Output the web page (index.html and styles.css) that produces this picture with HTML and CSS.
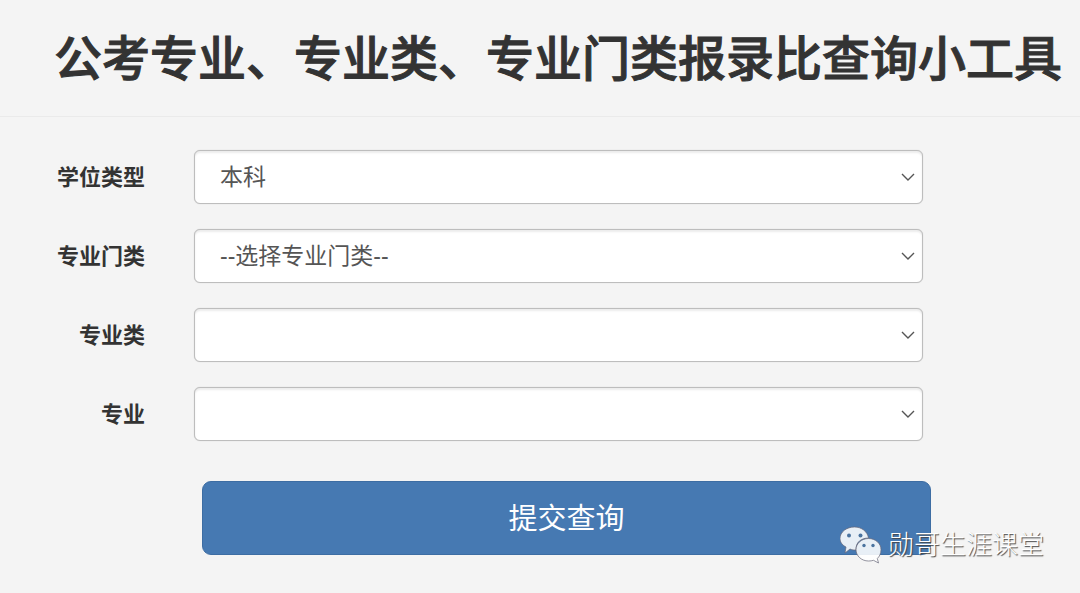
FILE: index.html
```html
<!DOCTYPE html>
<html lang="zh-CN">
<head>
<meta charset="utf-8">
<meta name="viewport" content="width=device-width, initial-scale=1">
<title>公考专业、专业类、专业门类报录比查询小工具</title>
<link rel="stylesheet" href="styles.css">
</head>
<body>
<header class="page-header"><h1 class="title">公考专业、专业类、专业门类报录比查询小工具</h1></header>
<form class="query-form">
  <div class="row">
    <label class="label" for="degree">学位类型</label>
    <div class="field"><select class="select" id="degree"><option>本科</option></select><svg class="chevron" viewBox="0 0 14 8" aria-hidden="true"><path d="M1 1l6 6 6-6"/></svg></div>
  </div>
  <div class="row">
    <label class="label" for="category">专业门类</label>
    <div class="field"><select class="select" id="category"><option>--选择专业门类--</option></select><svg class="chevron" viewBox="0 0 14 8" aria-hidden="true"><path d="M1 1l6 6 6-6"/></svg></div>
  </div>
  <div class="row">
    <label class="label" for="group">专业类</label>
    <div class="field"><select class="select" id="group"></select><svg class="chevron" viewBox="0 0 14 8" aria-hidden="true"><path d="M1 1l6 6 6-6"/></svg></div>
  </div>
  <div class="row">
    <label class="label" for="major">专业</label>
    <div class="field"><select class="select" id="major"></select><svg class="chevron" viewBox="0 0 14 8" aria-hidden="true"><path d="M1 1l6 6 6-6"/></svg></div>
  </div>
  <button class="submit" type="submit">提交查询</button>
</form>
<div class="watermark">
  <svg class="wechat" viewBox="0 0 42 38" aria-hidden="true">
    <path class="bubble" d="M16 24c-2 0-4 0-6-1l-5 4 1-6C2 19 0 16 0 12.500C0 6 6.500 1 14.500 1c7 0 13 4.500 14 11-7 0-13 4-12.500 12z"/>
    <path class="bubble" d="M28.500 12.500c-7 0-12.500 5-12.500 11.200S21.500 35 28.500 35c2 0 3.500-.2 5-.7l5 2.700-1.200-4.500c2.200-2 3.700-5 3.700-8.800 0-6.200-5.500-11.200-12.500-11.200z"/>
    <circle class="eye" cx="9" cy="9.500" r="2"/><circle class="eye" cx="20.500" cy="9.500" r="2"/>
    <circle class="eye" cx="24" cy="19.500" r="1.700"/><circle class="eye" cx="33" cy="19.500" r="1.700"/>
  </svg>
  <span>勋哥生涯课堂</span>
</div>
</body>
</html>
```
FILE: styles.css
```css
* { box-sizing: border-box; }
body { margin: 0; background: #f4f4f4; color: #333; font-family: "Liberation Sans", "Noto Sans CJK SC", sans-serif; }
.page-header { padding: 24px 0 20px 54px; border-bottom: 1px solid #eaeaea; }
.title { margin: 0; font-size: 48px; line-height: 72px; font-weight: 500; -webkit-text-stroke: 1px #333; white-space: nowrap; }
.query-form { padding: 33px 149px 39px 0; }
.row { display: grid; grid-template-columns: 145px 1fr; column-gap: 49px; align-items: center; margin: 0 8px 25px 0; }
.label { padding-top: 2px; text-align: right; font-size: 22px; line-height: 32px; font-weight: 700; }
.field { display: grid; align-items: center; }
.select { grid-area: 1 / 1; width: 100%; height: 54px; padding: 0 48px 0 25px; appearance: none; border: 1px solid #bdbdbd; border-radius: 6px; background: #fff; box-shadow: inset 0 2px 2px rgba(0,0,0,.08), 0 0 1px rgba(0,0,0,.2); color: #555; font: inherit; font-size: 23px; }
.chevron { grid-area: 1 / 1; justify-self: end; width: 14px; height: 8px; margin-right: 8px; fill: none; stroke: #555; stroke-width: 1.4; pointer-events: none; }
.submit { display: block; width: calc(100% - 202px); height: 74px; margin: 40px 0 0 202px; padding: 0 0 4px; border: 1px solid #3d6da3; border-radius: 9px; background: #4679b2; color: #fff; font: inherit; font-size: 29px; }
.watermark { position: absolute; right: 36px; bottom: 28px; display: flex; align-items: center; gap: 6px; color: #fff; font-size: 26px; line-height: 40px; font-weight: 300; text-shadow: 1px 1px 1px #444; }
.wechat { width: 42px; height: 38px; }
.bubble { fill: #fff; fill-opacity: .88; stroke: #667; stroke-width: .7; }
.eye { fill: #4a739f; }
```
